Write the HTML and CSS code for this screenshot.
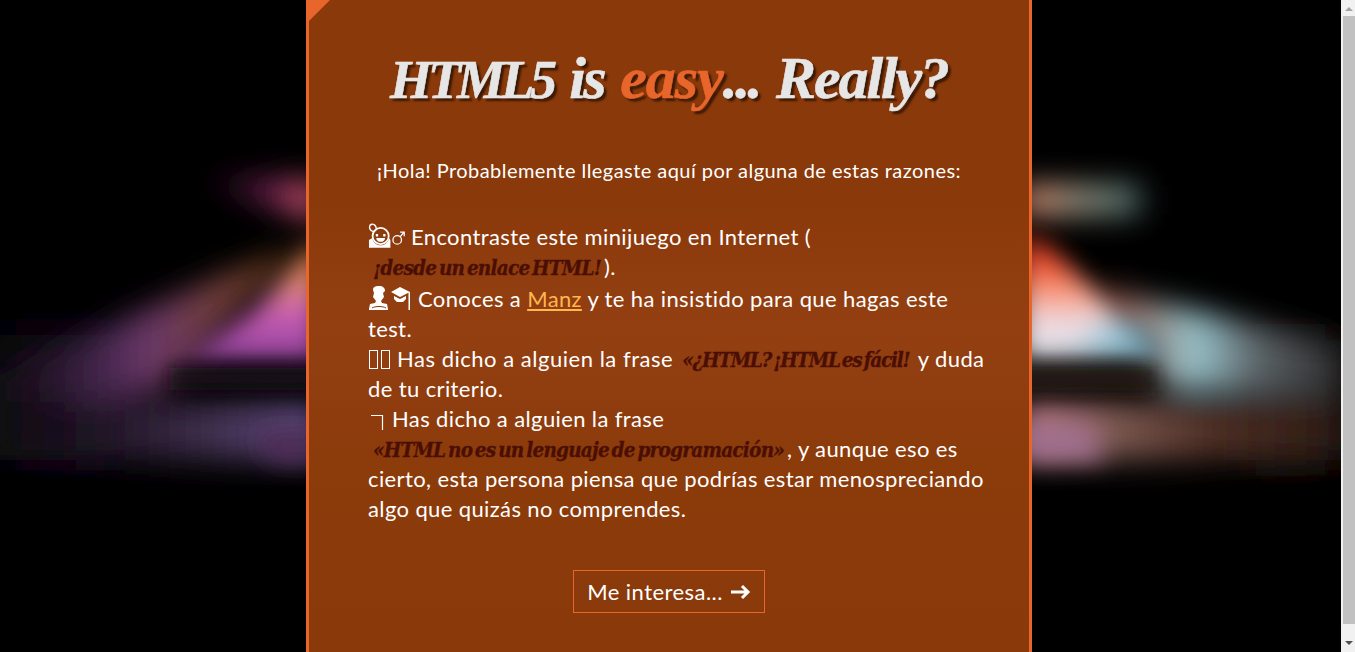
FILE: index.html
```html
<!DOCTYPE html>
<html lang="es">
<head>
<meta charset="utf-8">
<title>HTML5 is easy... Really?</title>
<link rel="stylesheet" href="styles.css">
</head>
<body>
<div class="stage">
  <svg class="backdrop" viewBox="0 0 1341 652" aria-hidden="true">
    <defs>
      <filter id="b9" x="-30%" y="-80%" width="160%" height="260%"><feGaussianBlur stdDeviation="9"/></filter>
      <filter id="b12" x="-30%" y="-80%" width="160%" height="260%"><feGaussianBlur stdDeviation="12"/></filter>
      <filter id="b15" x="-30%" y="-80%" width="160%" height="260%"><feGaussianBlur stdDeviation="15"/></filter>
      <filter id="b24" x="-30%" y="-80%" width="160%" height="260%"><feGaussianBlur stdDeviation="24"/></filter>
      <linearGradient id="lbandDiag" x1="0" y1="0" x2="1" y2="0">
        <stop offset="0" stop-color="#140a14"/><stop offset=".12" stop-color="#1e1020"/><stop offset=".33" stop-color="#40244a"/><stop offset=".5" stop-color="#6a3868"/><stop offset=".67" stop-color="#703c44"/><stop offset=".85" stop-color="#744028"/><stop offset="1" stop-color="#a06028"/>
      </linearGradient>
      <linearGradient id="ltri" x1="0" y1="0" x2="0" y2="1">
        <stop offset="0" stop-color="#e07a30"/><stop offset=".38" stop-color="#e08870"/><stop offset=".62" stop-color="#c85cb4"/><stop offset="1" stop-color="#8a4098"/>
      </linearGradient>
      <linearGradient id="lband" x1="0" y1="0" x2="1" y2="0">
        <stop offset="0" stop-color="#0e0810"/><stop offset=".35" stop-color="#221628"/><stop offset=".65" stop-color="#3e2e4c"/><stop offset="1" stop-color="#604c80"/>
      </linearGradient>
      <linearGradient id="rtri" x1="0" y1="0" x2="0" y2="1">
        <stop offset="0" stop-color="#901810"/><stop offset=".28" stop-color="#f05530"/><stop offset=".52" stop-color="#f8a890"/><stop offset=".72" stop-color="#ecdce4"/><stop offset="1" stop-color="#dce0e8"/>
      </linearGradient>
      <linearGradient id="rblue" x1="0" y1="0" x2="1" y2="0">
        <stop offset="0" stop-color="#dce0e8"/><stop offset=".5" stop-color="#a0c8d8"/><stop offset="1" stop-color="#4a8498"/>
      </linearGradient>
      <linearGradient id="rDiag" x1="0" y1="0" x2="1" y2="0">
        <stop offset="0" stop-color="#903020"/><stop offset=".2" stop-color="#907870"/><stop offset=".4" stop-color="#98c4cc"/><stop offset=".65" stop-color="#5c6468"/><stop offset="1" stop-color="#2a2a2a"/>
      </linearGradient>
      <linearGradient id="rband" x1="0" y1="0" x2="1" y2="0">
        <stop offset="0" stop-color="#c07c84"/><stop offset=".3" stop-color="#7a5850"/><stop offset=".6" stop-color="#4e2e24"/><stop offset="1" stop-color="#2a1a12"/>
      </linearGradient>
      <linearGradient id="rtop" x1="0" y1="0" x2="1" y2="0">
        <stop offset="0" stop-color="#e89070"/><stop offset=".5" stop-color="#909080"/><stop offset="1" stop-color="#4e7070"/>
      </linearGradient>
      <linearGradient id="ltop" x1="1" y1="0" x2="0" y2="0">
        <stop offset="0" stop-color="#d05a68"/><stop offset=".4" stop-color="#7a2458"/><stop offset="1" stop-color="#200a1e"/>
      </linearGradient>
    </defs>
    <g filter="url(#b24)">
      <rect x="0" y="335" width="120" height="120" fill="#180c1a"/>
      <rect x="1240" y="340" width="101" height="120" fill="#1a1614"/>
    </g>
    <g filter="url(#b15)">
      <polygon points="300,250 230,272 0,375 0,425 170,385 245,300" fill="url(#lbandDiag)"/>
      <polygon points="1095,285 1150,300 1341,345 1341,400 1240,392 1165,388" fill="url(#rDiag)"/>
      <rect x="0" y="402" width="320" height="58" fill="url(#lband)"/>
      <rect x="1020" y="402" width="321" height="58" fill="url(#rband)"/>
      <polygon points="205,180 320,180 320,224" fill="url(#ltop)"/>
      <rect x="1020" y="185" width="120" height="30" fill="url(#rtop)"/>
    </g>
    <g filter="url(#b12)">
      <polygon points="320,236 320,362 178,362 255,310" fill="url(#ltri)"/>
      <polygon points="255,432 320,432 320,462 270,462" fill="#4e2a54"/>
      <polygon points="1020,232 1048,244 1165,360 1020,360" fill="url(#rtri)"/>
      <polygon points="1100,318 1142,325 1165,360 1060,360" fill="url(#rblue)"/>
      <polygon points="1020,425 1090,425 1105,460 1020,460" fill="#a07090"/>
    </g>
    <g filter="url(#b9)">
      <rect x="170" y="368" width="150" height="22" fill="#170c18"/>
      <rect x="1020" y="368" width="135" height="22" fill="#281a12"/>
    </g>
  </svg>
  <main class="panel">
    <h1 class="title"><span class="caps">HTML5</span> is <span class="hot">easy</span>... <span class="really">Really?</span></h1>
    <p class="intro">¡Hola! Probablemente llegaste aquí por alguna de estas razones:</p>
    <div class="reasons">
      <div class="line"><svg class="icon wide" viewBox="0 0 38 25" aria-hidden="true"><ellipse cx="5" cy="4.500" rx="3.200" ry="3.800" fill="none" stroke="currentColor" stroke-width="1.500" transform="rotate(-30 5 4.500)"/><circle cx="13" cy="13" r="8.300" fill="none" stroke="currentColor" stroke-width="1.800"/><path fill="currentColor" d="M8 11h2.400v2.400H8zm7.600 0H18v2.400h-2.400zM8.500 15h9c0 2.500-2 4-4.500 4s-4.500-1.500-4.500-4zM1 25v-8l3.500-2c.5 4 3.500 7.500 8.500 7.500s8-3.500 8.500-7.500l1.500 2v8z"/><circle cx="30" cy="17" r="4.400" fill="none" stroke="currentColor" stroke-width="1.300"/><path d="M33 14l4-5M33 9h4.200v4.200" fill="none" stroke="currentColor" stroke-width="1.300"/></svg>Encontraste este minijuego en Internet (</div>
      <div class="line"><em class="quote">¡desde un enlace HTML!</em>).</div>
      <div class="line gap"><svg class="icon wider" viewBox="0 0 44 24" aria-hidden="true"><path fill="currentColor" d="M11 0c4 0 6 2 6 5l-2 2 1 4-3 4 1 2 5 1 1 5v1H1v-1l1-5 5-1 1-2-3-4 1-4-1-3c0-3 2-4 6-4z"/><path fill="none" stroke="#8a390a" d="M4 22c3-2 11-2 14 0"/><path fill="currentColor" d="M23 6l9-5 10 5-10 5zM26 10l6 3 6-3v3l-3 3h-6l-3-3z"/><rect x="40.500" y="6" width="1.500" height="18" fill="currentColor"/></svg>Conoces a <a class="link" href="#">Manz</a> y te ha insistido para que hagas este</div>
      <div class="line">test.</div>
      <div class="line"><span class="tofu"></span><span class="tofu"></span><span class="after-tofu">Has dicho a alguien la frase</span> <em class="quote tight">«¿HTML? ¡HTML es fácil!</em> y duda</div>
      <div class="line">de tu criterio.</div>
      <div class="line"><svg class="icon small" viewBox="0 0 18 20" aria-hidden="true"><path d="M3 5.500h11.500V20" fill="none" stroke="currentColor" stroke-width="1.200"/></svg>Has dicho a alguien la frase</div>
      <div class="line"><em class="quote">«HTML no es un lenguaje de programación»</em>, y aunque eso es</div>
      <div class="line">cierto, esta persona piensa que podrías estar menospreciando</div>
      <div class="line">algo que quizás no comprendes.</div>
    </div>
    <div class="action">
      <a class="button" href="#">Me interesa...
        <svg class="arrow" viewBox="0 0 20 16" aria-hidden="true"><path d="M0 8h17M11 2l6 6-6 6" fill="none" stroke="currentColor" stroke-width="3"/></svg>
      </a>
    </div>
  </main>
</div>
<aside class="scrollbar" aria-hidden="true">
  <span class="arrow-up"></span>
  <span class="thumb"></span>
  <span class="arrow-down"></span>
</aside>
</body>
</html>
```
FILE: styles.css
```css
* { box-sizing: border-box; }
html, body { height: 100%; }
body {
  margin: 0;
  display: flex;
  height: 652px;
  overflow: hidden;
  background: #000;
  color: #fff;
  font-family: Lato, "Noto Sans", sans-serif;
}
.stage {
  position: relative;
  flex: 1;
  min-width: 0;
  display: flex;
  justify-content: center;
  padding-right: 3px;
  overflow: hidden;
}
.backdrop {
  position: absolute;
  left: 0;
  top: 0;
  width: 1341px;
  height: 652px;
}
.panel {
  position: relative;
  width: 726px;
  height: 652px;
  padding: 40px 59px 0;
  background: linear-gradient(180deg, #8a390a 0, #8a390a 30%, #933f12 50%, #8c3b0b 70%, #8a390a 100%);
  border-left: 3px solid #e8652c;
  border-right: 3px solid #e8652c;
}
.panel::before {
  content: "";
  position: absolute;
  left: 0;
  top: 0;
  border-style: solid;
  border-width: 21px 21px 0 0;
  border-color: #e8652c transparent transparent transparent;
}
.title {
  margin: 0;
  height: 76px;
  font-family: "Liberation Serif", serif;
  font-style: italic;
  font-weight: 700;
  font-size: 60px;
  letter-spacing: -2.7px;
  word-spacing: 4px;
  line-height: 76px;
  text-align: center;
  white-space: nowrap;
  color: #e6e6e6;
  -webkit-text-stroke: .6px currentColor;
  text-shadow: 3px 3px 2px #3c1a05;
}
.caps { font-size: 54px; letter-spacing: -4px; }
.hot { color: #e8652c; letter-spacing: -1px; }
.really { letter-spacing: -2.1px; }
.intro {
  margin: 41px 0 0;
  font-size: 20px;
  letter-spacing: .45px;
  line-height: 26px;
  text-align: center;
  white-space: nowrap;
}
.reasons {
  margin: 39px 0 0;
  font-size: 22px;
  letter-spacing: .38px;
  white-space: nowrap;
}
.line {
  height: 30px;
  line-height: 30px;
}
.line.gap { margin-top: 2px; }
.quote {
  display: inline-block;
  padding: 0 3px 0 5px;
  line-height: 20px;
  font-family: "DejaVu Serif", serif;
  font-stretch: condensed;
  font-weight: 700;
  font-style: italic;
  font-size: 20.5px;
  letter-spacing: -.75px;
  word-spacing: -3px;
  -webkit-text-stroke: .3px currentColor;
  color: #4a0f04;
}
.quote.tight { margin-left: -2px; letter-spacing: -1.25px; }
.link { color: #ffb64d; }
.icon { display: inline-block; vertical-align: -3px; color: #fff; margin-right: 6px; }
.icon.wide { width: 37px; height: 25px; }
.icon.wider { width: 44px; height: 24px; }
.icon.small { width: 18px; height: 20px; }
.tofu {
  display: inline-block;
  width: 9px;
  height: 19px;
  margin: 0 2px 0 1px;
  vertical-align: -2px;
  border: 1px solid #fff;
}
.after-tofu { margin-left: 5px; letter-spacing: .52px; }
.action {
  display: flex;
  justify-content: center;
  margin-top: 46px;
}
.button {
  display: flex;
  align-items: center;
  gap: 8px;
  height: 43px;
  padding: 0 13px;
  border: 1px solid #e8652c;
  color: #fff;
  font-size: 22px;
  letter-spacing: .45px;
  text-decoration: none;
  white-space: nowrap;
}
.arrow { width: 20px; height: 16px; }
.scrollbar {
  position: relative;
  flex: 0 0 14px;
  height: 652px;
  display: flex;
  flex-direction: column;
  align-items: flex-end;
  background: #f1f1f1;
}
.thumb {
  width: 12px;
  height: 608px;
  margin-top: 16px;
  background: #c1c1c1;
}
.arrow-up, .arrow-down {
  position: absolute;
  right: 2px;
  border-left: 4px solid transparent;
  border-right: 4px solid transparent;
}
.arrow-up { top: 7px; border-bottom: 4px solid #a3a3a3; }
.arrow-down { bottom: 7px; border-top: 4px solid #505050; }
```
